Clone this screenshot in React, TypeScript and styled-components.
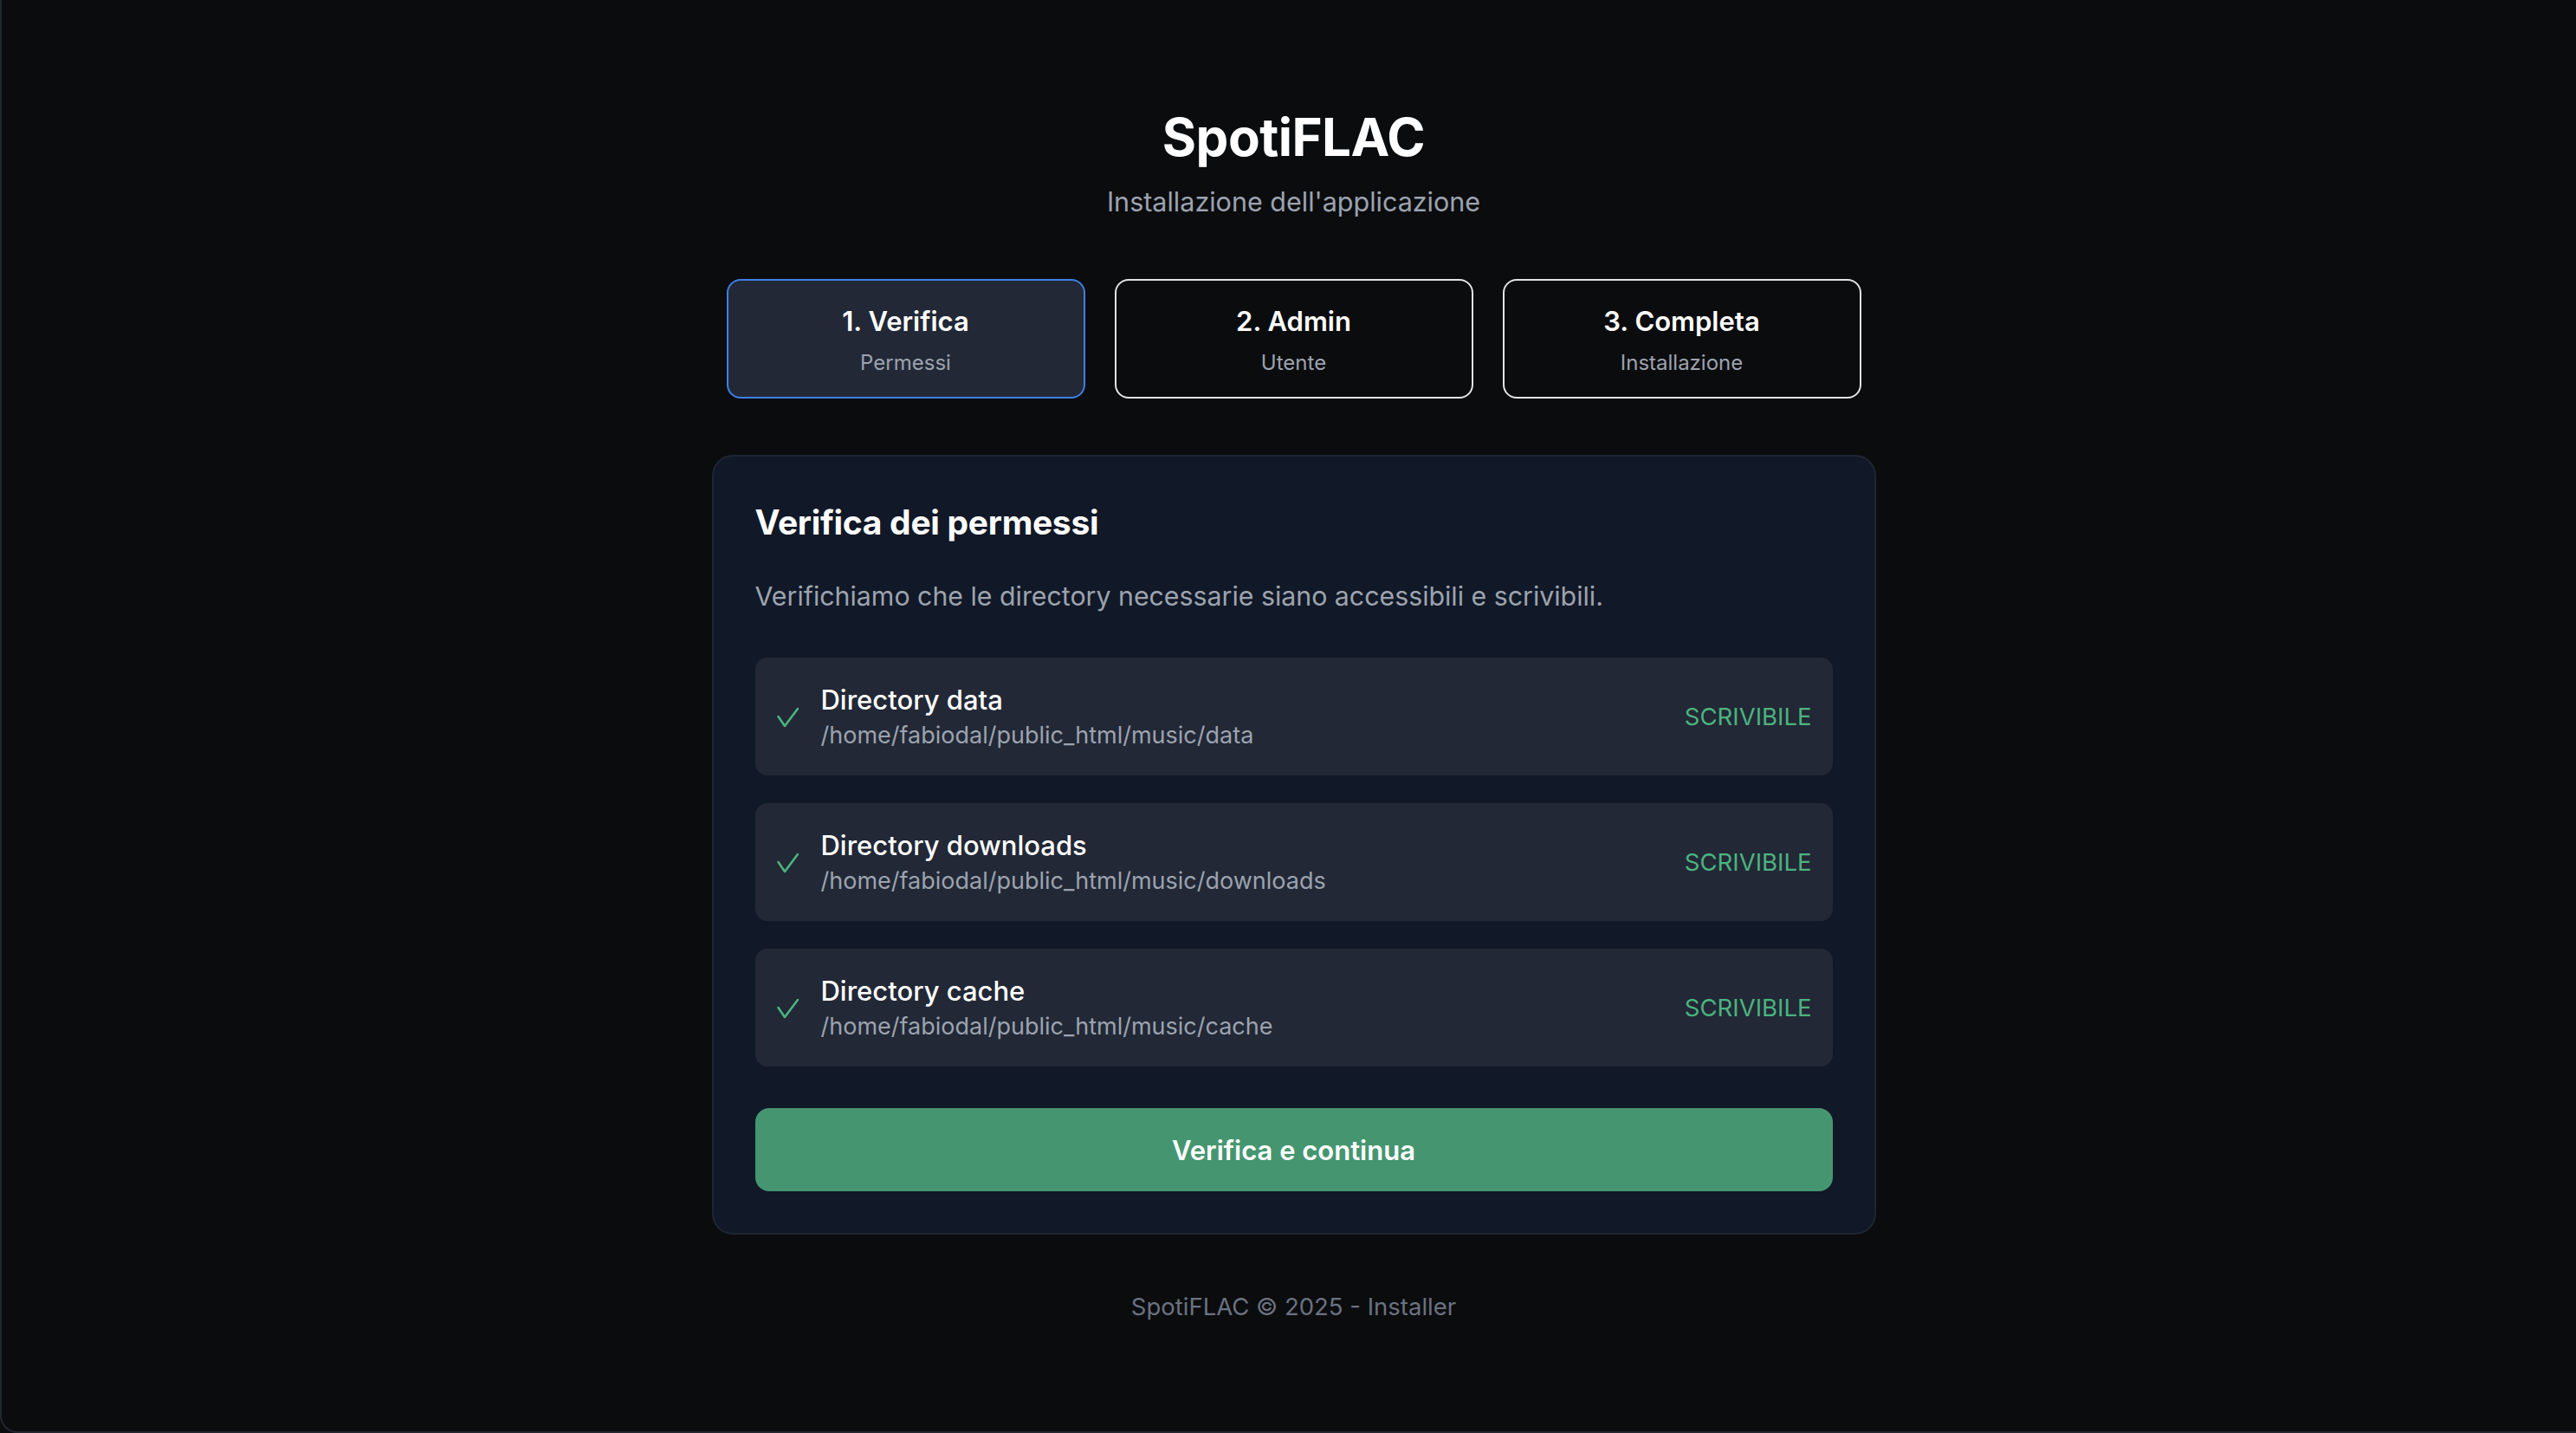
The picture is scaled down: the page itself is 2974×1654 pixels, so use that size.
import React from "react";
import styled, { createGlobalStyle } from "styled-components";

const GlobalStyle = createGlobalStyle`
  html, body {
    margin: 0;
    padding: 0;
    background: #0b0c0e;
  }
  body {
    font-family: Inter, "Noto Sans", "Liberation Sans", sans-serif;
    -webkit-font-smoothing: antialiased;
  }
  * { box-sizing: border-box; }
`;

const Frame = styled.div`
  min-height: 1654px;
  background: #0b0c0e;
  border-left: 2px solid #23272f;
  border-bottom: 2px solid #23272f;
  border-bottom-left-radius: 20px;
  padding-left: 11px;
  display: flex;
  justify-content: center;
`;

const Container = styled.main`
  width: 1344px;
  padding-top: 122px;
  display: flex;
  flex-direction: column;
  align-items: stretch;
`;

const Header = styled.header`
  display: flex;
  flex-direction: column;
  align-items: center;
  gap: 17px;
`;

const Title = styled.h1`
  margin: 0;
  font-size: 60px;
  line-height: 72px;
  font-weight: 700;
  color: #ffffff;
  letter-spacing: -0.5px;
`;

const Subtitle = styled.p`
  margin: 0;
  font-size: 30.5px;
  line-height: 44px;
  color: #9ca3af;
`;

const Steps = styled.nav`
  margin-top: 67px;
  padding: 0 17px;
  display: grid;
  grid-template-columns: repeat(3, 1fr);
  gap: 34px;
`;

const StepCard = styled.div<{ $active?: boolean }>`
  height: 138px;
  border-radius: 16px;
  border: 2px solid ${(p) => (p.$active ? "#3f7fe6" : "#e2e3e5")};
  background: ${(p) => (p.$active ? "#222836" : "#0b0c0e")};
  padding-top: 27px;
  display: flex;
  flex-direction: column;
  align-items: center;
  gap: 13px;
`;

const StepTitle = styled.div`
  font-size: 31px;
  line-height: 40px;
  font-weight: 600;
  color: #ffffff;
`;

const StepSub = styled.div`
  font-size: 24px;
  line-height: 30px;
  color: #9ca3af;
`;

const Card = styled.section`
  margin-top: 65px;
  background: #111827;
  border: 2px solid #1e2533;
  border-radius: 24px;
  padding: 48px;
  display: flex;
  flex-direction: column;
`;

const CardTitle = styled.h2`
  margin: 0;
  font-size: 39px;
  line-height: 56px;
  font-weight: 700;
  color: #ffffff;
  letter-spacing: -0.3px;
`;

const CardText = styled.p`
  margin: 33px 0 0;
  font-size: 30.3px;
  line-height: 48px;
  color: #9ca3af;
`;

const DirList = styled.div`
  margin-top: 47px;
  display: flex;
  flex-direction: column;
  gap: 32px;
`;

const DirRow = styled.div`
  height: 136px;
  background: #222836;
  border-radius: 14px;
  padding: 0 24px;
  display: flex;
  align-items: center;
  gap: 24px;
`;

const CheckIcon = styled.svg`
  width: 28px;
  height: 28px;
  flex: none;
`;

const DirInfo = styled.div`
  flex: 1;
  display: flex;
  flex-direction: column;
`;

const DirName = styled.div`
  font-size: 31px;
  line-height: 44px;
  font-weight: 500;
  color: #ffffff;
`;

const DirPath = styled.div`
  font-size: 27px;
  line-height: 38px;
  color: #9ca3af;
`;

const Status = styled.span`
  font-size: 27.5px;
  line-height: 38px;
  color: #4cb37f;
  text-transform: uppercase;
`;

const PrimaryButton = styled.button`
  margin-top: 48px;
  height: 96px;
  border: none;
  border-radius: 16px;
  background: #459670;
  color: #ffffff;
  font-family: inherit;
  font-size: 31px;
  font-weight: 600;
  cursor: pointer;
`;

const Footer = styled.footer`
  margin-top: 63px;
  text-align: center;
  font-size: 27.5px;
  line-height: 40px;
  color: #6b7280;
`;

const steps = [
  { title: "1. Verifica", sub: "Permessi", active: true },
  { title: "2. Admin", sub: "Utente", active: false },
  { title: "3. Completa", sub: "Installazione", active: false },
];

const dirs = [
  { name: "Directory data", path: "/home/fabiodal/public_html/music/data" },
  { name: "Directory downloads", path: "/home/fabiodal/public_html/music/downloads" },
  { name: "Directory cache", path: "/home/fabiodal/public_html/music/cache" },
];

function Check() {
  return (
    <CheckIcon viewBox="0 0 28 28" fill="none">
      <polyline
        points="2.5,14 10,25 25,5"
        stroke="#4cb37f"
        strokeWidth="2.6"
        strokeLinecap="round"
        strokeLinejoin="round"
      />
    </CheckIcon>
  );
}

export default function App() {
  return (
    <>
      <GlobalStyle />
      <Frame>
        <Container>
          <Header>
            <Title>SpotiFLAC</Title>
            <Subtitle>Installazione dell'applicazione</Subtitle>
          </Header>
          <Steps>
            {steps.map((s) => (
              <StepCard key={s.title} $active={s.active}>
                <StepTitle>{s.title}</StepTitle>
                <StepSub>{s.sub}</StepSub>
              </StepCard>
            ))}
          </Steps>
          <Card>
            <CardTitle>Verifica dei permessi</CardTitle>
            <CardText>
              Verifichiamo che le directory necessarie siano accessibili e scrivibili.
            </CardText>
            <DirList>
              {dirs.map((d) => (
                <DirRow key={d.name}>
                  <Check />
                  <DirInfo>
                    <DirName>{d.name}</DirName>
                    <DirPath>{d.path}</DirPath>
                  </DirInfo>
                  <Status>Scrivibile</Status>
                </DirRow>
              ))}
            </DirList>
            <PrimaryButton>Verifica e continua</PrimaryButton>
          </Card>
          <Footer>SpotiFLAC © 2025 - Installer</Footer>
        </Container>
      </Frame>
    </>
  );
}
